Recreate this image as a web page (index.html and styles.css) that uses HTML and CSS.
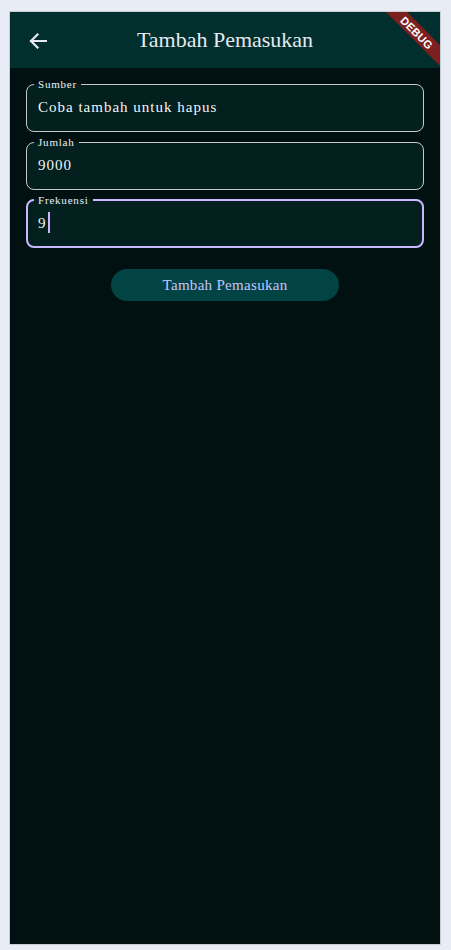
FILE: index.html
```html
<!DOCTYPE html>
<html lang="id">
<head>
<meta charset="utf-8">
<title>Tambah Pemasukan</title>
<link rel="stylesheet" href="styles.css">
</head>
<body>
<div class="frame">
  <header class="appbar">
    <button class="back" aria-label="Kembali">
      <svg width="18" height="16" viewBox="0 0 18 16"><path d="M17 8H2M8.5 1.5L2 8l6.5 6.5" fill="none" stroke="#e6e9ef" stroke-width="2.2" stroke-linecap="square"/></svg>
    </button>
    <h1 class="title">Tambah Pemasukan</h1>
    <div class="debug"><span>DEBUG</span></div>
  </header>
  <main class="content">
    <fieldset class="field">
      <legend class="label">Sumber</legend>
      <div class="value">Coba tambah untuk hapus</div>
    </fieldset>
    <fieldset class="field">
      <legend class="label">Jumlah</legend>
      <div class="value">9000</div>
    </fieldset>
    <fieldset class="field focused">
      <legend class="label">Frekuensi</legend>
      <div class="value">9<span class="caret"></span></div>
    </fieldset>
    <div class="actions">
      <button class="submit">Tambah Pemasukan</button>
    </div>
  </main>
</div>
</body>
</html>
```
FILE: styles.css
```css
* { box-sizing: border-box; }
html, body { margin: 0; padding: 0; }
body {
  background: #e8ecf4;
  padding: 11px 0 0 9px;
  font-family: "Liberation Serif", serif;
}
.frame {
  width: 432px;
  height: 934px;
  border: 1px solid #c9ccd3;
  background: #011010;
  display: flex;
  flex-direction: column;
  overflow: hidden;
}
.appbar {
  position: relative;
  height: 56px;
  flex: none;
  background: #002f2d;
  display: flex;
  align-items: center;
  padding: 0 0 0 18px;
  overflow: hidden;
}
.back {
  background: none;
  border: 0;
  padding: 0;
  width: 20px;
  height: 20px;
  display: flex;
  align-items: center;
  justify-content: center;
  margin-top: 2px;
}
.title {
  position: absolute;
  left: 0;
  right: 0;
  top: 0;
  margin: 0;
  text-align: center;
  font-weight: normal;
  font-size: 22px;
  line-height: 56px;
  color: #e6e9ef;
  pointer-events: none;
}
.debug {
  position: absolute;
  top: 13px;
  right: -24px;
  width: 94px;
  height: 15px;
  background: #7b1f1f;
  transform: rotate(45deg);
  display: flex;
  align-items: center;
  justify-content: center;
}
.debug span {
  font-family: "Liberation Sans", sans-serif;
  font-weight: bold;
  font-size: 11px;
  letter-spacing: 0.2px;
  color: #ffffff;
}
.content {
  flex: 1;
  padding: 10px 16px 0 16px;
  display: flex;
  flex-direction: column;
  gap: 4px;
}
.field {
  margin: 0;
  border: 1px solid #c6c9d1;
  border-radius: 8px;
  background: #031f1e;
  padding: 0 11px 0 11px;
  height: 54px;
  min-width: 0;
}
.label {
  margin-left: -4px;
  padding: 0 4px 0 4px;
  font-size: 11px;
  line-height: 12px;
  letter-spacing: 0.8px;
  color: #eceff4;
}
.value {
  padding-top: 7px;
  font-size: 15px;
  line-height: 20px;
  letter-spacing: 1px;
  color: #f2f4f7;
  display: flex;
  align-items: center;
}
.focused {
  border: 2px solid #c9b8ff;
  padding-left: 10px;
}
.focused .value { padding-top: 6px; }
.caret {
  display: inline-block;
  width: 2px;
  height: 21px;
  background: #c9b8ff;
  margin-left: 1px;
}
.actions {
  display: flex;
  justify-content: center;
  padding-top: 17px;
}
.submit {
  width: 228px;
  height: 32px;
  border: 0;
  border-radius: 16px;
  background: #014443;
  color: #c9c3ff;
  font-family: "Liberation Serif", serif;
  font-size: 15px;
  letter-spacing: 0.3px;
  padding: 0;
}
```
